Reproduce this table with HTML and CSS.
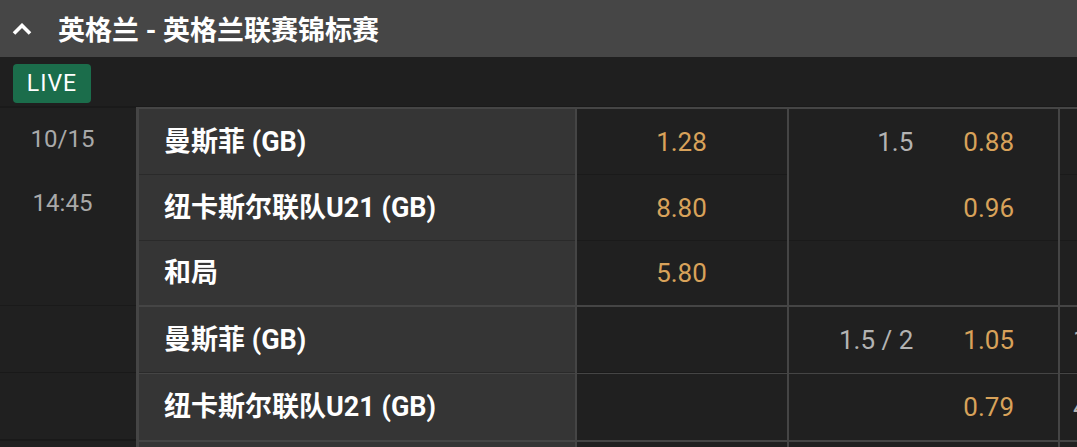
FILE: index.html
```html
<!DOCTYPE html>
<html lang="zh">
<head>
<meta charset="utf-8">
<link rel="stylesheet" href="styles.css">
</head>
<body>
<div class="page">
  <div class="header">
    <svg class="chevron" width="20" height="12" viewBox="0 0 20 12"><polyline points="2,10.5 10,2.5 18,10.5" fill="none" stroke="#fff" stroke-width="3.6"/></svg>
    <span class="title">英格兰 - 英格兰联赛锦标赛</span>
  </div>
  <div class="liverow"><span class="live">LIVE</span></div>

  <div class="event">
    <div class="when">
      <div class="date">10/15</div>
      <div class="time">14:45</div>
    </div>
    <div class="markets">
      <div class="team line">曼斯菲 (GB)</div>
      <div class="odds1 line"><span class="odd">1.28</span></div>
      <div class="odds2"><span class="hcp">1.5</span><span class="odd">0.88</span></div>
      <div class="odds3 line"></div>

      <div class="team line">纽卡斯尔联队U21 (GB)</div>
      <div class="odds1 line"><span class="odd">8.80</span></div>
      <div class="odds2 line"><span class="odd">0.96</span></div>
      <div class="odds3 line"></div>

      <div class="team last">和局</div>
      <div class="odds1 last"><span class="odd">5.80</span></div>
      <div class="odds2 last"></div>
      <div class="odds3 last"></div>
    </div>
  </div>

  <div class="event">
    <div class="when split">
      <div class="whencell"></div>
      <div class="whencell"></div>
    </div>
    <div class="markets">
      <div class="team line">曼斯菲 (GB)</div>
      <div class="odds1 line"></div>
      <div class="odds2"><span class="hcp">1.5 / 2</span><span class="odd">1.05</span></div>
      <div class="odds3 line"><span class="hcp">1.5</span></div>

      <div class="team">纽卡斯尔联队U21 (GB)</div>
      <div class="odds1"></div>
      <div class="odds2"><span class="odd">0.79</span></div>
      <div class="odds3"><span class="hcp">4.5</span></div>
    </div>
  </div>

  <div class="event">
    <div class="when"></div>
    <div class="markets">
      <div class="team"></div>
      <div class="odds1"></div>
      <div class="odds2"></div>
      <div class="odds3"></div>
    </div>
  </div>
</div>
</body>
</html>
```

FILE: styles.css
```css
html, body {
  margin: 0;
  padding: 0;
  background: #1f1f1f;
  overflow: hidden;
}
body {
  font-family: Roboto, "Noto Sans CJK SC", sans-serif;
  width: 1077px;
  height: 447px;
}
.page {
  width: 1077px;
}
.header {
  height: 57px;
  background: #464646;
  display: flex;
  align-items: center;
  padding-left: 12px;
  box-sizing: border-box;
}
.chevron {
  display: block;
  margin-top: 1px;
}
.title {
  margin-left: 26px;
  color: #fff;
  font-weight: 700;
  font-size: 27px;
  line-height: 32px;
  padding-top: 4px;
}
.liverow {
  height: 50px;
  box-sizing: border-box;
  padding: 7px 13px 0;
  background: #1f1f1f;
  border-bottom: 1px solid #1a1a1a;
}
.live {
  display: flex;
  align-items: center;
  justify-content: center;
  width: 78px;
  height: 39px;
  border-radius: 4px;
  background: #1b6d4b;
  color: #fff;
  font-size: 23px;
  letter-spacing: 1px;
}
.event {
  display: flex;
}
.when {
  width: 136px;
  flex: none;
  background: #202020;
  color: #a9a9a9;
  font-size: 24px;
  text-align: center;
  padding-right: 11px;
  box-sizing: border-box;
  border-top: 1px solid #1a1a1a;
}
.date {
  line-height: 32px;
  margin-top: 15px;
}
.time {
  line-height: 32px;
  margin-top: 32px;
}
.when.split {
  padding-right: 0;
}
.whencell {
  height: 66px;
  border-bottom: 1px solid #191919;
}
.markets {
  flex: 1;
  display: grid;
  grid-template-columns: 436px 210px 269px 1fr;
  column-gap: 2px;
  background: #454545;
  padding: 2px 0 0 3px;
}
.markets > div {
  height: 66px;
  box-sizing: border-box;
  display: flex;
  align-items: center;
}
.markets > div.last {
  height: 64px;
}
.team {
  background: #353535;
  color: #fff;
  font-weight: 700;
  font-size: 27px;
  padding-left: 25px;
  padding-bottom: 5px;
}
.team.line {
  border-bottom: 1px solid #2a2a2a;
}
.odds1, .odds2, .odds3 {
  background: #202020;
  font-size: 26px;
}
.odds1.line, .odds2.line, .odds3.line {
  border-bottom: 1px solid #1a1a1a;
}
.odds1 {
  justify-content: center;
  padding-right: 1px;
}
.odds2 {
  justify-content: flex-end;
  padding-right: 44px;
}
.odds3 {
  padding-left: 13px;
  overflow: hidden;
}
.odd {
  color: #d8a25a;
}
.hcp {
  color: #b3b3b3;
}
.odds2 .hcp {
  margin-right: 50px;
}
```
